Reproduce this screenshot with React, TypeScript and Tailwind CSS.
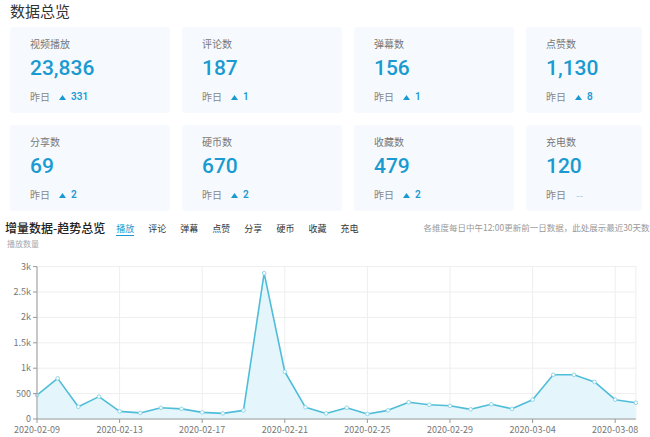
// Data overview: stat cards plus the daily increment trend chart.

const FONT = { fontFamily: '"Noto Sans CJK SC", "Noto Sans", sans-serif' };

type Stat = { label: string; value: string; delta?: string };

const STATS: Stat[] = [
  { label: "视频播放", value: "23,836", delta: "331" },
  { label: "评论数", value: "187", delta: "1" },
  { label: "弹幕数", value: "156", delta: "1" },
  { label: "点赞数", value: "1,130", delta: "8" },
  { label: "分享数", value: "69", delta: "2" },
  { label: "硬币数", value: "670", delta: "2" },
  { label: "收藏数", value: "479", delta: "2" },
  { label: "充电数", value: "120" },
];

const TABS = ["播放", "评论", "弹幕", "点赞", "分享", "硬币", "收藏", "充电"];

const SERIES = [
  470, 800, 240, 440, 150, 120, 220, 200, 130, 110, 170, 2870, 930, 230, 110,
  220, 100, 170, 330, 280, 260, 190, 290, 200, 380, 870, 870, 730, 380, 320,
];

const X0 = 37;
const X_STEP = 20.65;
const Y0 = 169;
const Y_PER_K = 50.8;
const xAt = (i: number) => X0 + i * X_STEP;
const yAt = (v: number) => Y0 - (v / 1000) * Y_PER_K;

const X_LABELS = [
  [0, "2020-02-09"],
  [4, "2020-02-13"],
  [8, "2020-02-17"],
  [12, "2020-02-21"],
  [16, "2020-02-25"],
  [20, "2020-02-29"],
  [24, "2020-03-04"],
  [28, "2020-03-08"],
] as const;

const Y_LABELS = ["0", "500", "1k", "1.5k", "2k", "2.5k", "3k"];

function StatCard({ stat }: { stat: Stat }) {
  return (
    <div className="h-[86px] rounded-[3px] bg-[#f6fafe] pl-[20px] pt-[10px]">
      <div className="text-[10px] leading-[14px] text-[#777]">{stat.label}</div>
      <div
        className="mt-[4px] text-[21px] font-medium leading-[26px] text-[#1a9ad0]"
        style={{ fontFamily: 'Roboto, "Liberation Sans", sans-serif' }}
      >
        {stat.value}
      </div>
      <div className="mt-[9px] flex items-center text-[10px] leading-[14px] text-[#888]">
        <span>昨日</span>
        {stat.delta ? (
          <span
            className="ml-[9px] flex items-center gap-[5px] font-semibold text-[#1a9ad0]"
            style={{ fontFamily: 'Roboto, "Liberation Sans", sans-serif' }}
          >
            <svg width="7" height="5" viewBox="0 0 7 5">
              <path d="M3.5 0 L7 5 L0 5 Z" fill="#1a9ad0" />
            </svg>
            {stat.delta}
          </span>
        ) : (
          <span className="ml-[10px] text-[#9fc9dc]">--</span>
        )}
      </div>
    </div>
  );
}

function TrendChart() {
  const pts = SERIES.map((v, i) => `${xAt(i)},${yAt(v)}`).join(" ");
  const area = `${xAt(0)},${Y0} ${pts} ${xAt(SERIES.length - 1)},${Y0}`;
  const right = xAt(SERIES.length - 1);
  const top = Y0 - 6 * 25.4;
  return (
    <svg width="650" height="187" viewBox="0 0 650 187" className="block">
      {/* horizontal grid */}
      {Y_LABELS.map((_, k) => {
        const y = Y0 - k * 25.4;
        return <line key={k} x1={X0} x2={right} y1={y} y2={y} stroke="#eeeeee" strokeWidth="1" />;
      })}
      {/* vertical grid */}
      {X_LABELS.map(([i]) => (
        <line key={i} x1={xAt(i)} x2={xAt(i)} y1={top} y2={Y0} stroke="#eeeeee" strokeWidth="1" />
      ))}
      <line x1={right} x2={right} y1={top} y2={Y0} stroke="#eeeeee" strokeWidth="1" />

      <polygon points={area} fill="#e4f6fc" />
      <polyline points={pts} fill="none" stroke="#50bdd8" strokeWidth="1.6" strokeLinejoin="round" />
      {SERIES.map((v, i) => (
        <circle key={i} cx={xAt(i)} cy={yAt(v)} r="1.8" fill="#fff" stroke="#8fd6e8" strokeWidth="1" />
      ))}

      {/* axes */}
      <line x1={X0} x2={X0} y1={top} y2={Y0} stroke="#999" strokeWidth="1" />
      <line x1={X0} x2={right} y1={Y0} y2={Y0} stroke="#999" strokeWidth="1.2" />
      {Y_LABELS.map((t, k) => {
        const y = Y0 - k * 25.4;
        return (
          <g key={t}>
            <line x1={X0 - 4} x2={X0} y1={y} y2={y} stroke="#999" strokeWidth="1" />
            <text x={X0 - 6} y={y + 3} textAnchor="end" fontSize="9" fill="#777" style={FONT}>
              {t}
            </text>
          </g>
        );
      })}
      {X_LABELS.map(([i, t]) => (
        <g key={t}>
          <line x1={xAt(i)} x2={xAt(i)} y1={Y0} y2={Y0 + 4} stroke="#999" strokeWidth="1" />
          <text x={xAt(i)} y={Y0 + 13.5} textAnchor="middle" fontSize="9" fill="#777" style={FONT}>
            {t}
          </text>
        </g>
      ))}
    </svg>
  );
}

export default function App() {
  return (
    <div className="h-[437px] w-[650px] overflow-hidden bg-white" style={FONT}>
      <div className="pl-[10px] pt-[1px] text-[15px] leading-[20px] text-[#333]">数据总览</div>

      <div className="mt-[6px] grid grid-cols-[160px_160px_160px_116px] gap-x-[12px] gap-y-[12px] pl-[10px]">
        {STATS.map((s) => (
          <StatCard key={s.label} stat={s} />
        ))}
      </div>

      <div className="mt-[8px] flex items-end whitespace-nowrap pl-[5px]">
        <span className="text-[12px] font-medium leading-[18px] text-[#222]">增量数据-趋势总览</span>
        <div className="ml-[11px] flex gap-[14px] pb-[1px] text-[9px] leading-[13px] text-[#333]">
          {TABS.map((t, i) => (
            <span key={t} className={i === 0 ? "border-b border-[#1a9ad0] text-[#1a9ad0]" : ""}>
              {t}
            </span>
          ))}
        </div>
        <span className="ml-[65px] pb-[4px] text-[8.5px] leading-[12px] text-[#999]">
          各维度每日中午12:00更新前一日数据，此处展示最近30天数据
        </span>
      </div>
      <div className="mt-[1px] pl-[7px] text-[8px] leading-[12px] text-[#aaa]">播放数量</div>

      <TrendChart />
    </div>
  );
}
